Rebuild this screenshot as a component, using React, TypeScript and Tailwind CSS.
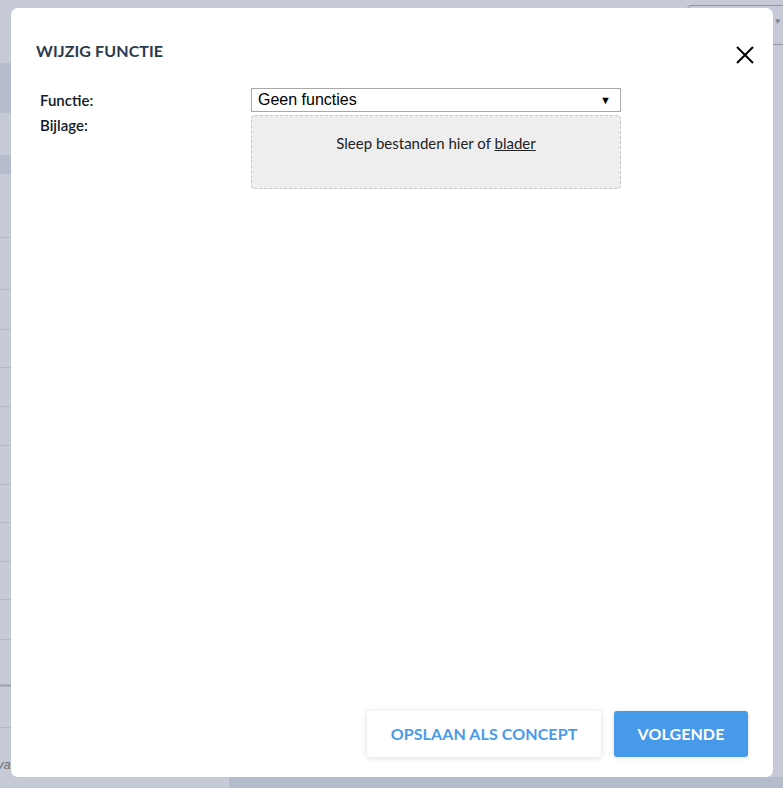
import React from "react";

const sans = { fontFamily: "Lato, 'Open Sans', sans-serif" } as const;
const arial = { fontFamily: "Arial, 'Liberation Sans', sans-serif" } as const;

function LeftStrip() {
  // sliver of the table at the left of the dimmed page
  const rows = [64, 52, 40, 38, 39, 39, 39, 38, 39, 38, 40];
  return (
    <div className="w-[11px] flex flex-col">
      <div className="h-[63px]" />
      <div className="h-[50px] bg-[#b5bccb]" />
      <div className="h-[42px]" />
      <div className="h-[19px] bg-[#b5bccb]" />
      {rows.map((h, i) => (
        <div key={i} className="border-b border-[#b3b8c4]" style={{ height: h }} />
      ))}
      <div className="h-[47px] border-b-[3px] border-[#a9adb7]" />
      <div className="h-[41px] border-b border-[#b3b8c4]" />
      <div className="flex-1 flex items-end pb-[4px] overflow-hidden">
        <span className="text-[13px] italic text-[#6b6f78] -ml-[3px] leading-[16px]" style={arial}>va</span>
      </div>
    </div>
  );
}

function RightStrip() {
  return (
    <div className="w-[10px] flex flex-col overflow-hidden">
      <div className="h-[33px] border-b border-[#b0b6c4]" />
      <div className="h-[30px]" />
      <div className="h-[50px] bg-[#b5bccb]" />
      <div className="h-[60px] border-b border-[#b3b8c4] pl-[6px] pt-[22px] text-[12px] text-[#b58a4a] leading-[14px]">▾</div>
      <div className="h-[38px] border-b border-[#b3b8c4] flex items-end pl-[3px] text-[14px] text-[#9a6b3a] leading-[16px] pb-[3px]" style={arial}>T</div>
      <div className="h-[29px] border-b border-[#b3b8c4] ml-[3px] text-[14px] text-[#6c86b0] leading-[16px] pt-[3px]" style={arial}>V</div>
      <div className="h-[112px]" />
      <div className="flex-1 bg-[#b3bccb]" />
    </div>
  );
}

function PageBehind() {
  return (
    <div className="absolute inset-0 bg-[#c6cad6] flex flex-col">
      <div className="h-[777px] flex">
        <LeftStrip />
        <div className="flex-1 relative">
          <div className="ml-[675px] mt-[5px] w-[120px] h-[40px] rounded-[6px] border border-[#8e94a6] flex items-center pl-[87px] pb-[8px]">
            <span className="text-[8px] text-[#7c8190]">▼</span>
          </div>
        </div>
        <RightStrip />
      </div>
      <div className="flex-1 flex">
        <div className="w-[229px]" />
        <div className="flex-1 bg-[#b3bccb]" />
      </div>
    </div>
  );
}

export default function App() {
  return (
    <div className="relative w-[783px] h-[788px] overflow-hidden" style={sans}>
      <PageBehind />
      <div className="absolute left-[11px] top-[8px] w-[762px] h-[769px] bg-white rounded-[7px] flex flex-col">
        <div className="flex items-start justify-between pl-[25px] pr-[18px] pt-[33px]">
          <h2 className="text-[16px] font-bold tracking-[0.1px] text-[#2b3a4d] leading-[20px]">WIJZIG FUNCTIE</h2>
          <button className="mt-[4px] w-[20px] h-[20px] flex items-center justify-center">
            <svg width="18" height="18" viewBox="0 0 18 18">
              <path d="M1 1L17 17M17 1L1 17" stroke="#000" strokeWidth="2" />
            </svg>
          </button>
        </div>

        <div className="flex pl-[29px] pt-[23px]">
          <div className="w-[211px] flex flex-col text-[15px] font-semibold text-[#111827]">
            <div className="h-[24px] flex items-center pt-[1px]">Functie:</div>
            <div className="h-[26px] flex items-center">Bijlage:</div>
          </div>
          <div className="w-[370px] flex flex-col gap-[3px]">
            <div
              className="h-[24px] border border-[#a9a9a9] flex items-center justify-between pl-[6px] pr-[9px] text-[16px] text-black"
              style={arial}
            >
              <span>Geen functies</span>
              <span className="text-[11px]">▼</span>
            </div>
            <div className="h-[74px] bg-[#eeeeee] border border-dashed border-[#c6c6c6] rounded-[4px] flex justify-center pt-[16px] text-[15px] text-[#222]">
              <span>
                Sleep bestanden hier of <span className="underline">blader</span>
              </span>
            </div>
          </div>
        </div>

        <div className="flex-1" />

        <div className="flex justify-end gap-[13px] pr-[25px] pb-[20px]">
          <button className="w-[234px] h-[46px] bg-white rounded-[3px] shadow-[0_1px_6px_rgba(0,0,0,0.14)] text-[16px] font-bold text-[#4a9ae8] tracking-[0.1px]">
            OPSLAAN ALS CONCEPT
          </button>
          <button className="w-[134px] h-[46px] bg-[#4799e9] rounded-[3px] shadow-[0_1px_5px_rgba(0,0,0,0.12)] text-[16px] font-bold text-white tracking-[0.1px]">
            VOLGENDE
          </button>
        </div>
      </div>
    </div>
  );
}
